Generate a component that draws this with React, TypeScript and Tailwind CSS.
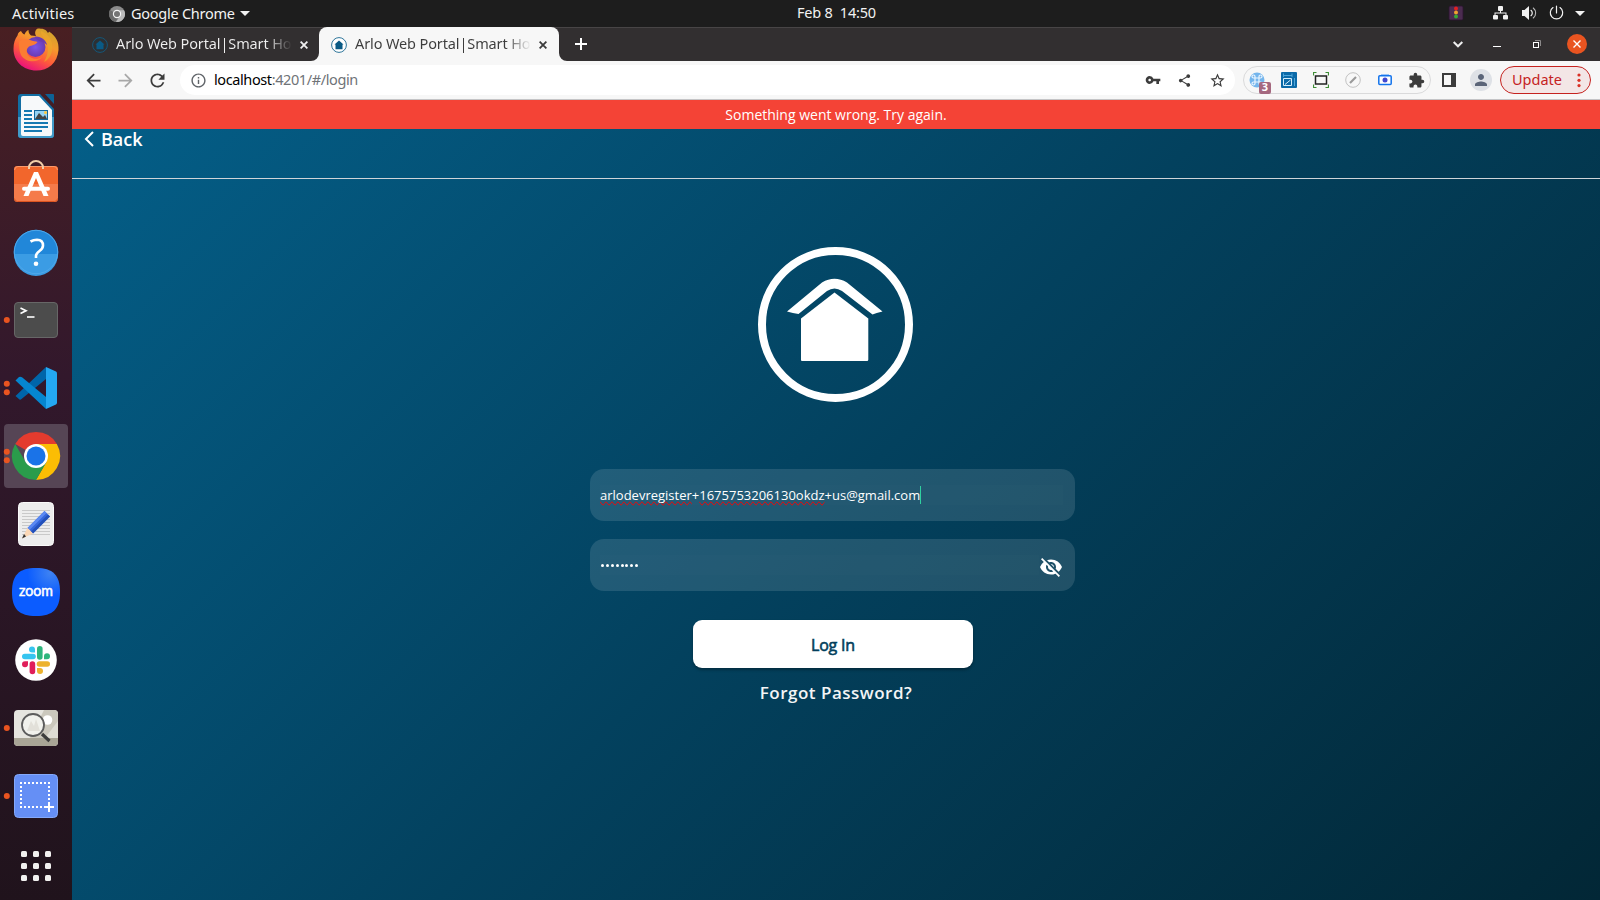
import type { ReactNode } from "react";
import {
  MdArrowBack,
  MdArrowForward,
  MdExtension,
  MdInfoOutline,
  MdPerson,
  MdRefresh,
  MdShare,
  MdStarBorder,
  MdVisibilityOff,
  MdVpnKey,
} from "react-icons/md";

const UI = "font-['Noto_Sans','Open_Sans',sans-serif]";

function TopBar() {
  return (
    <header className={`${UI} flex h-[27px] shrink-0 items-center bg-[#1d1d1d] text-[15px] text-[#f2f2f2]`}>
      <div className="flex w-[797px] items-center pl-3">
        <span className="w-[97px] whitespace-nowrap text-[14.5px] tracking-[0.2px]">Activities</span>
        <svg className="h-4 w-4" viewBox="0 0 16 16">
          <circle cx="8" cy="8" r="8" fill="#8b8b8b" />
          <path d="M8 8 L1 4 A8 8 0 0 0 6.5 15.8 L11 10Z" fill="#6c6c6c" />
          <path d="M8 4.2H15A8 8 0 0 1 7 16L11 10Z" fill="#b9b9b9" />
          <circle cx="8" cy="8" r="4.2" fill="#f5f5f5" />
          <circle cx="8" cy="8" r="3" fill="#757575" />
        </svg>
        <span className="ml-1.5 w-[109px] whitespace-nowrap text-[14.5px] tracking-[-0.25px]">Google Chrome</span>
        <svg className="h-[5px] w-[10px]" viewBox="0 0 10 5"><path d="M0 0H10L5 5Z" fill="#f2f2f2" /></svg>
      </div>
      <span className="w-[83px] whitespace-pre pb-px text-[14.5px] tracking-[-0.2px]">Feb 8  14:50</span>
      <svg className="ml-auto h-[27px] w-[160px]" viewBox="1440 0 160 27">
        <rect x="1449" y="6" width="14" height="14" rx="1.5" fill="#4b2c50" stroke="#2c1531" strokeWidth=".8" />
        <circle cx="1456" cy="8.5" r="2" fill="#e32020" />
        <circle cx="1456" cy="12.6" r="2" fill="#efa030" />
        <circle cx="1456" cy="16.5" r="2" fill="#35a835" />
        <g fill="#f2f2f2">
          <rect x="1498" y="6" width="5" height="5" rx="1" />
          <rect x="1493" y="15" width="5" height="4.5" rx="1" />
          <rect x="1503" y="15" width="5" height="4.5" rx="1" />
          <path d="M1500 10h1v2.5h5.5v3h-1v-2h-10v2h-1v-3h5.500Z" />
          <path d="M1522 10h2.500l4.500-4v14l-4.500-4h-2.500Z" />
          <path d="M1575 11H1585L1580 16Z" />
        </g>
        <g fill="none" stroke="#f2f2f2" strokeLinecap="round">
          <path d="M1531 10.300a3.500 3.500 0 0 1 0 5.400" strokeWidth="1.200" />
          <path d="M1533.300 8a6.500 6.500 0 0 1 0 10" strokeWidth="1.100" stroke="#bbb" />
          <path d="M1553 7.600a6.200 6.200 0 1 0 7 0M1556.500 6v7" strokeWidth="1.200" />
        </g>
      </svg>
    </header>
  );
}

function DockItem({ children, running = 0, active = false }: { children: ReactNode; running?: number; active?: boolean }) {
  return (
    <svg className="h-[68px] w-[72px] shrink-0" viewBox="0 0 72 68">
      {active && <rect x="4" y="2" width="64" height="64" rx="4" fill="#564555" />}
      {children}
      {running === 1 && <circle cx="6.800" cy="34" r="3" fill="#e95420" />}
      {running === 2 && (
        <g fill="#e95420">
          <circle cx="6.800" cy="29.700" r="3" />
          <circle cx="6.800" cy="38.300" r="3" />
        </g>
      )}
    </svg>
  );
}

function Dock() {
  return (
    <nav className="w-[72px] shrink-0 overflow-hidden bg-linear-to-b from-[#491f22] via-[#32182c] via-40% to-[#20131c]">
      <div className="-mt-[13px] flex flex-col">
        <DockItem>
          <defs>
            <linearGradient id="fx" x1=".85" y1="0" x2=".3" y2="1">
              <stop offset="0" stopColor="#c9a52c" />
              <stop offset=".35" stopColor="#f59a2c" />
              <stop offset=".65" stopColor="#ff5c3a" />
              <stop offset="1" stopColor="#e80c80" />
            </linearGradient>
            <radialGradient id="fp">
              <stop offset="0" stopColor="#7a55ea" />
              <stop offset="1" stopColor="#6a3bb0" />
            </radialGradient>
          </defs>
          <path d="M17.500 21.500C18 18.500 20 17.500 21 17C22 19 23 20 24.500 20.500C25.500 18 27 16.500 28.500 16C28.500 18 29 20 31 21.500L36 22C34 18 36 15 38 14.500C42 14.500 46 15 48 19C49 18 49 17.500 49 17.500C56 22 59 28 58.500 36C57.500 49 48 56.500 36.500 56.500C23 56.500 13.500 47 13.500 35C13.500 29 15 25 17.500 21.500Z" fill="url(#fx)" />
          <circle cx="35.500" cy="33" r="10" fill="url(#fp)" />
          <path d="M35 22.500C41 22 46 26 47 31C44 28 42 27 40 27.500C38 26 36 25 35 22.500Z" fill="#6a3bb0" />
          <path d="M19 28C21 25 26 24.500 30 26C33 27 36 27.500 37.500 28C35.500 31 33 31 30 32C26.500 34 26 37 28 41C31 45 37 46 42 43C37 50 25 48 21 41C19 37 19 32 19 28Z" fill="#fb7d33" />
          <path d="M41 17C49 20 54 28 52 37C51 42 48 46 44 48C49 39 49 32 46 27C43.500 23 40 20 41 17Z" fill="#eda62b" opacity=".7" />
        </DockItem>
        <DockItem>
          <path d="M21 12H40L54 27V53Q54 56 51 56H21Q18 56 18 53V15Q18 12 21 12Z" fill="#126ea3" />
          <path d="M18 35H54V53Q54 56 51 56H21Q18 56 18 53Z" fill="#419bc9" />
          <path d="M23 14H39L52 28V52Q52 54 50 54H23Q21 54 21 52V16Q21 14 23 14Z" fill="#f7f9fa" />
          <path d="M45 12H53Q54 12 54 13V22Z" fill="#0d6296" />
          <path d="M24 29h8M24 33h8M24 37h8M24 41h24M24 45h24M24 49h18" stroke="#167ab2" strokeWidth="2" />
          <rect x="34.500" y="28.500" width="13" height="9" fill="#96d3f3" stroke="#14679c" />
          <path d="M35 37L39 31L43 35L45 33L47 37Z" fill="#444" />
          <circle cx="45.500" cy="30.500" r="1.500" fill="#ffc83d" />
        </DockItem>
        <DockItem>
          <rect x="14" y="16" width="44" height="36" rx="3.500" fill="#f57b4a" />
          <path d="M14 34V19.500Q14 16 17.500 16H54.500Q58 16 58 19.500V34Z" fill="#f2662c" />
          <path d="M14.500 20Q15 16.500 18 16.500H54Q57 16.500 57.500 20" fill="none" stroke="#f99a6c" />
          <path d="M14.500 48.500Q14.500 51.500 17.500 51.500H54.500Q57.500 51.500 57.500 48.500" fill="none" stroke="#dd5520" />
          <path d="M29 19V17.500A7 6.500 0 0 1 43 17.500V19" fill="none" stroke="#f3cfa9" strokeWidth="2" />
          <path d="M34 22H38L48.500 46H43.500L36 28L28.500 46H23.500Z" fill="#fff" />
          <path d="M24 38.700H48" stroke="#fff" strokeWidth="4" strokeLinecap="round" />
        </DockItem>
        <DockItem>
          <circle cx="36" cy="34" r="22.300" fill="#2187d9" />
          <path d="M14 36A22 22 0 0 0 58 36Z" fill="#3b9ce4" />
          <circle cx="36" cy="34" r="21.700" fill="none" stroke="#4fa8ea" />
          <path d="M30.500 23.500Q33.500 21.800 37 21.800Q43 22 43 27.500Q43 30.500 39.500 33Q36 35.500 36 38V40" fill="none" stroke="#fff" strokeWidth="2.600" />
          <circle cx="36" cy="45.800" r="2.300" fill="#fff" />
        </DockItem>
        <DockItem running={1}>
          <rect x="14.500" y="16.500" width="43" height="35" rx="3.500" fill="#4c4c4c" stroke="#676767" />
          <path d="M20.500 22L26 24.700L20.500 27.400" fill="none" stroke="#fff" strokeWidth="1.700" />
          <path d="M27 31H34.500" stroke="#fff" strokeWidth="1.600" />
        </DockItem>
        <DockItem running={2}>
          <path d="M15.500 42L19.500 45.500Q20.500 46 21.500 45L46 25V13Z" fill="#0065a9" />
          <path d="M15.500 26.500L19 23Q20.500 22.200 22 23.300L46 43V55Z" fill="#0586d0" />
          <path d="M46 13L56 17.500Q57 18 57 19.500V48.500Q57 50 56 50.500L46 55Z" fill="#24a8f2" />
        </DockItem>
        <DockItem running={2} active>
          <path d="M36 34L15.200 22A24 24 0 0 1 56.800 22Z" fill="#e33b2e" />
          <path d="M36 22H56.800A24 24 0 0 1 36 58L46.400 40Z" fill="#fbbd04" />
          <path d="M25.600 40L15.200 22A24 24 0 0 0 36 58L46.400 40L36 46Z" fill="#2a9c4b" />
          <circle cx="36" cy="34" r="12" fill="#fff" />
          <circle cx="36" cy="34" r="9.500" fill="#1a73e8" />
        </DockItem>
        <DockItem>
          <rect x="18.500" y="12.500" width="35" height="43" rx="4" fill="#ededed" stroke="#fafafa" />
          <path d="M22 20.500h28M22 23.500h28M22 26.500h28M22 29.500h28M22 32.500h28M22 35.500h28M22 38.500h28M22 41.500h28M22 44.500h28" stroke="#c9c9c9" />
          <path d="M44.500 21L50 26.500L33 43.500L27.500 38Z" fill="#3566dc" />
          <path d="M44.500 21L46.500 23L29.500 40L27.500 38Z" fill="#5b89f2" />
          <path d="M48 24.500L50 26.500L33 43.500L31 41.500Z" fill="#2350ba" />
          <path d="M27.500 38L33 43.500L22 48.500Z" fill="#fbd7b5" />
          <path d="M24 44L26 46.500L22 48.500Z" fill="#333" />
        </DockItem>
        <DockItem>
          <defs>
            <radialGradient id="zm" cx=".8" cy=".1" r=".8">
              <stop offset="0" stopColor="#3f83f2" />
              <stop offset=".6" stopColor="#0b5cff" />
            </radialGradient>
          </defs>
          <path d="M36 10C53 10 60 17 60 34S53 58 36 58S12 51 12 34S19 10 36 10Z" fill="url(#zm)" />
          <text className="font-['Lato',sans-serif]" x="36" y="38" textAnchor="middle" textLength="34" lengthAdjust="spacingAndGlyphs" fontWeight="400" fontSize="15" fill="#fff" stroke="#fff" strokeWidth=".5">zoom</text>
        </DockItem>
        <DockItem>
          <circle cx="36" cy="34" r="20.800" fill="#fff" />
          <g strokeLinecap="round" strokeWidth="5.600" fill="none">
            <path d="M24.800 30.500H33" stroke="#36c5f0" />
            <path d="M39.800 22.800V31" stroke="#2eb67d" />
            <path d="M39.500 38H47.200" stroke="#ecb22e" />
            <path d="M32.400 38V45.500" stroke="#e01e5a" />
          </g>
          <path d="M35 26.500H32A3 3 0 1 1 35 23.500Z" fill="#36c5f0" />
          <path d="M44 33.300V30.300A3 3 0 1 1 47 33.300Z" fill="#2eb67d" />
          <path d="M37 42H40A3 3 0 1 1 37 45Z" fill="#ecb22e" />
          <path d="M28 35.200V38.200A3 3 0 1 1 25 35.200Z" fill="#e01e5a" />
        </DockItem>
        <DockItem running={1}>
          <rect x="14" y="16" width="44" height="36" rx="4" fill="#e6e5df" />
          <path d="M44 16H54Q58 16 58 20V44H30Z" fill="#cbc8bd" />
          <path d="M58 27V44H45Z" fill="#dedcd4" />
          <path d="M14 44H58V48Q58 52 54 52H18Q14 52 14 48Z" fill="#a9a596" />
          <circle cx="47.500" cy="26" r="4.800" fill="#fff" />
          <circle cx="33" cy="31" r="11" fill="#f1f1ec" stroke="#5c5c5c" strokeWidth="1.800" />
          <path d="M27 37L31 27L34 32L36 25L40 37Z" fill="#e2e0d9" />
          <path d="M42 40L49.500 47" stroke="#3c3c3c" strokeWidth="3.200" />
        </DockItem>
        <DockItem running={1}>
          <rect x="14.500" y="12.500" width="43" height="43" rx="4" fill="#658ff5" stroke="#84a9fa" />
          <g fill="none" stroke="#fff" strokeWidth="2" strokeDasharray="2 2">
            <path d="M20 21H50M20 45H45M21 24V44M49 24V38" />
          </g>
          <path d="M49 40V50M44 45H54" stroke="#fff" strokeWidth="2" />
        </DockItem>
        <svg className="h-[72px] w-[72px]" viewBox="0 0 72 72" fill="#f2f1f0">
          {[21, 33, 45].map((y) =>
            [21, 33, 45].map((x) => <rect key={`${x}-${y}`} x={x} y={y} width="6" height="6" rx="1.500" />),
          )}
        </svg>
      </div>
    </nav>
  );
}

function Favicon({ dark = false }: { dark?: boolean }) {
  return (
    <svg className="h-4 w-4 shrink-0" viewBox="0 0 16 16">
      <circle cx="8" cy="8" r="7.400" fill={dark ? "#2b3034" : "#fff"} stroke={dark ? "#175778" : "#2c7499"} strokeWidth="1" />
      <path d="M3.500 7.500L8 3.500L12.500 7.500H11.500V12.200H4.500V7.500Z" fill="#0a5a85" />
    </svg>
  );
}

function CloseGlyph({ color }: { color: string }) {
  return (
    <svg className="h-2 w-2 shrink-0" viewBox="0 0 8 8">
      <path d="M.6 .6L7.400 7.400M7.400 .6L.6 7.400" stroke={color} strokeWidth="1.800" />
    </svg>
  );
}

function TabStrip() {
  return (
    <div className={`${UI} flex h-[34px] items-stretch border-t border-[#484546] bg-[#322f30] text-[14.5px]`}>
      <div className="flex w-[247px] items-center pl-5">
        <Favicon dark />
        <span className="ml-2 w-[176px] whitespace-nowrap bg-linear-to-r from-[#f0f0f0] from-85% to-transparent bg-clip-text pb-0.5 tracking-[-0.12px] text-transparent">
          Arlo Web Portal|Smart Ho
        </span>
        <span className="ml-2 flex"><CloseGlyph color="#f0f0f0" /></span>
      </div>
      <div className="relative -mt-px flex w-[240px] items-center rounded-t-lg bg-[#f7f7f7] pl-3 pt-px">
        <svg className="absolute bottom-0 -left-2 h-2 w-2" viewBox="0 0 8 8"><path d="M8 0V8H0A8 8 0 0 0 8 0Z" fill="#f7f7f7" /></svg>
        <svg className="absolute -right-2 bottom-0 h-2 w-2" viewBox="0 0 8 8"><path d="M0 0V8H8A8 8 0 0 1 0 0Z" fill="#f7f7f7" /></svg>
        <Favicon />
        <span className="ml-2 w-[176px] whitespace-nowrap bg-linear-to-r from-[#3c3c3c] from-85% to-transparent bg-clip-text pb-0.5 tracking-[-0.12px] text-transparent">
          Arlo Web Portal|Smart Ho
        </span>
        <span className="ml-2 flex"><CloseGlyph color="#3c3c3c" /></span>
      </div>
      <svg className="ml-4 h-full w-3 shrink-0" viewBox="0 0 12 33"><path d="M6 10V22M0 16H12" stroke="#fff" strokeWidth="2" /></svg>
      <svg className="ml-auto h-[33px] w-[160px]" viewBox="1440 28 160 33">
        <path d="M1453.700 42L1458 46.300L1462.300 42" fill="none" stroke="#eee" strokeWidth="2" />
        <path d="M1493 46.500H1501" stroke="#fff" />
        <rect x="1533.500" y="42.500" width="5" height="5" fill="none" stroke="#fff" />
        <path d="M1535 40.500H1540.500V46" fill="none" stroke="#8c8a8a" />
        <circle cx="1577" cy="44" r="10" fill="#e95420" />
        <path d="M1573.500 40.500L1580.500 47.500M1580.500 40.500L1573.500 47.500" stroke="#fff" strokeWidth="1.400" />
      </svg>
    </div>
  );
}

function Cell({ children }: { children: ReactNode }) {
  return <span className="relative flex w-8 shrink-0 items-center justify-center">{children}</span>;
}

function Toolbar() {
  return (
    <div className={`${UI} flex h-[39px] items-center border-b border-[#c4c4c6] bg-[#f7f7f7] text-[#3c3c3c]`}>
      <div className="flex pl-[5.500px]">
        <Cell><MdArrowBack size={21} /></Cell>
        <Cell><MdArrowForward size={21} color="#a8a8a8" /></Cell>
        <Cell><MdRefresh size={21} /></Cell>
      </div>
      <div className="ml-[6.500px] flex h-[30px] w-[1055px] items-center rounded-full bg-white pl-[9.500px] pr-0.5">
        <MdInfoOutline size={17} color="#5f6368" />
        <span className="ml-[7.500px] whitespace-nowrap pb-px text-[14.500px] tracking-[-0.400px] text-[#6f7377]">
          <span className="text-black">localhost</span>:4201/#/login
        </span>
        <div className="ml-auto flex">
          <Cell><MdVpnKey size={16} className="mr-px" /></Cell>
          <Cell><MdShare size={15} className="mr-px" /></Cell>
          <Cell><MdStarBorder size={17} /></Cell>
        </div>
      </div>
      <div className="ml-2 flex h-7 w-[188px] items-center rounded-full border border-[#dadadb]">
        <div className="-ml-[3px] flex">
          <Cell>
            <svg className="h-4 w-4" viewBox="0 0 16 16">
              <circle cx="8" cy="8" r="7.500" fill="#74b5ec" />
              <path d="M6 6H10V10H6ZM6 6H4.500A1.500 1.500 0 1 1 6 4.500ZM10 6V4.500A1.500 1.500 0 1 1 11.500 6ZM6 10V11.500A1.500 1.500 0 1 1 4.500 10ZM10 10H11.500A1.500 1.500 0 1 1 10 11.500Z" fill="none" stroke="#eaf5ff" strokeWidth="1.200" />
            </svg>
            <span className="absolute left-[18px] top-[10px] flex h-3 w-3 items-center justify-center rounded-[2px] bg-[#a5687f] text-[11px] font-bold text-white">3</span>
          </Cell>
          <Cell>
            <svg className="h-4 w-4" viewBox="0 0 16 16" fill="none">
              <rect width="16" height="16" rx="1" fill="#0b6aa8" />
              <path d="M2.500 3.500H11M2.500 1.500V5M11 1.500V5M13.500 6V14" stroke="#4ea6da" />
              <path d="M2.500 6.500H10.500V13.500H2.500ZM4 12.500L9.500 8" stroke="#d5eefc" />
            </svg>
          </Cell>
          <Cell>
            <svg className="h-4 w-4" viewBox="0 0 16 16" fill="none">
              <path d="M.5 3.500V.5H3.500M12.500 .5H15.500V3.500M15.500 12.500V15.500H12.500M3.500 15.500H.5V12.500" stroke="#3f8e36" strokeWidth="1.200" />
              <rect x="2.500" y="4" width="11" height="8" stroke="#222" strokeWidth="1.500" />
            </svg>
          </Cell>
          <Cell>
            <svg className="h-4 w-4" viewBox="0 0 16 16" fill="none">
              <circle cx="8" cy="8" r="7.300" stroke="#c2c2c2" />
              <path d="M5 11L11 5" stroke="#9a9a9a" strokeWidth="2.200" />
            </svg>
          </Cell>
          <Cell>
            <svg className="h-4 w-4" viewBox="0 0 16 16" fill="none">
              <path d="M4 2.500H12" stroke="#9cc4f7" />
              <rect x="1.800" y="3.800" width="12.400" height="8.700" rx="1" stroke="#1273ec" strokeWidth="1.500" fill="#fff" />
              <circle cx="8" cy="8" r="2.500" fill="#4048d0" />
            </svg>
          </Cell>
          <Cell><MdExtension size={17} className="mr-px" /></Cell>
        </div>
      </div>
      <div className="ml-0.5 flex">
        <Cell>
          <svg className="h-3.5 w-3.5" viewBox="0 0 14 14"><path d="M0 0H14V14H0ZM2 2V12H9V2Z" fill="#3c3c3c" fillRule="evenodd" /></svg>
        </Cell>
        <Cell>
          <span className="flex h-[22px] w-[22px] items-center justify-center rounded-full bg-[#dee1e6]"><MdPerson size={18} color="#5a6478" /></span>
        </Cell>
      </div>
      <div className="ml-[3px] flex h-7 w-[91px] items-center rounded-full border border-[#c5221f] bg-[#f3e6e6] pl-[11px] text-[#c5221f]">
        <span className="w-[50px] pb-px text-[14.500px]">Update</span>
        <svg className="ml-[14.500px] h-4 w-1" viewBox="0 0 4 16" fill="#d93025"><circle cx="2" cy="3" r="1.600" /><circle cx="2" cy="8.300" r="1.600" /><circle cx="2" cy="13.600" r="1.600" /></svg>
      </div>
    </div>
  );
}

function LoginPage() {
  return (
    <main className="flex h-[800px] flex-col bg-[linear-gradient(135deg,#045f89_0%,#03415e_50%,#022736_100%)] font-['Open_Sans',sans-serif] text-white">
      <div className="flex h-[29px] shrink-0 items-center justify-center bg-[#f44336] text-[14px]">Something went wrong. Try again.</div>
      <div className="flex h-[50px] shrink-0 items-start border-b border-[#cfd4d8] pl-3">
        <svg className="mt-0.5 h-4 w-[10px]" viewBox="0 0 10 16"><path d="M9 1L2 8L9 15" fill="none" stroke="#fff" strokeWidth="2" /></svg>
        <span className="ml-[7px] text-[18px] font-semibold leading-[21px]">Back</span>
      </div>
      <div className="flex flex-col items-center">
        <svg className="mt-[67px] h-[156px] w-[156px]" viewBox="758 246 156 156">
          <circle cx="835.500" cy="324.500" r="73.500" fill="none" stroke="#fff" strokeWidth="8" />
          <path d="M801 318.500L834.500 292.500L868.300 318.500V359.500Q868.300 361 867 361H802Q801 361 801 360Z" fill="#fff" />
          <path d="M787 311.500L822 282.500Q834.500 275 847 282.500L882.500 311.500Q876 313 872.500 314.500L842 291Q834.500 286 827 291L798.500 314Q793 313 787 311.500Z" fill="#fff" />
        </svg>
        <div className="mr-[7px] mt-[67px] flex h-[52px] w-[485px] items-center rounded-[14px] bg-white/12 pl-2.5">
          <div className="flex h-5 w-[463px] items-center bg-white/[0.012] pt-0.5 text-[13px]">
            <span className="[text-decoration-line:spelling-error]">arlodevregister</span>
            <span>+</span>
            <span className="[text-decoration-line:spelling-error]">1675753206130okdz</span>
            <span>+us@gmail.com</span>
            <span className="-mt-0.5 h-[18px] w-px bg-[#2fd0a0]" />
          </div>
        </div>
        <div className="mr-[7px] mt-[18px] flex h-[52px] w-[485px] items-center rounded-[14px] bg-white/12 pl-2.5">
          <div className="flex h-5 w-[439px] items-center gap-[1.900px] bg-white/[0.012] pl-px pt-px">
            {[0, 1, 2, 3, 4, 5, 6, 7].map((n) => <span key={n} className="h-[3px] w-[3px] rounded-full bg-white" />)}
          </div>
          <MdVisibilityOff size={24} className="mt-1" />
        </div>
        <button className="mr-1.5 mt-[29px] h-12 w-[280px] rounded-[9px] bg-white pt-px text-[16px] font-normal tracking-[-0.200px] text-[#033f5c] shadow-[0_2px_3px_rgba(0,0,0,0.3)] [-webkit-text-stroke:0.6px_#033f5c]">Log In</button>
        <a className="mt-[13px] text-[17px] font-semibold leading-6 tracking-[0.500px] text-[#f3f5f6]">Forgot Password?</a>
      </div>
    </main>
  );
}

export default function App() {
  return (
    <div className="flex h-[900px] w-[1600px] flex-col overflow-hidden">
      <TopBar />
      <div className="flex min-h-0 flex-1">
        <Dock />
        <div className="flex w-[1528px] flex-col">
          <TabStrip />
          <Toolbar />
          <LoginPage />
        </div>
      </div>
    </div>
  );
}
